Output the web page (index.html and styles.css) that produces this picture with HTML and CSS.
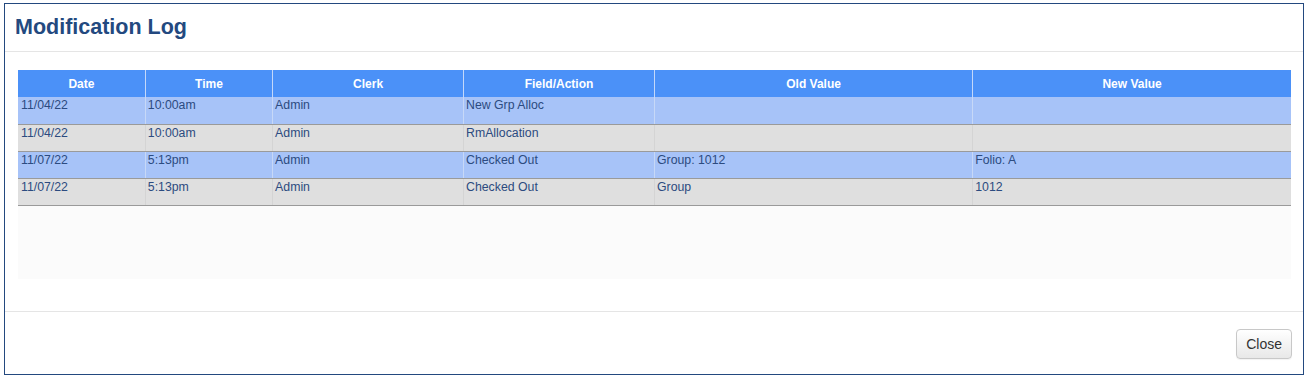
FILE: index.html
```html
<!DOCTYPE html>
<html>
<head lang="en">
    <meta charset="UTF-8">
    <title>Modification Log</title>
    <link rel="stylesheet" href="styles.css">
</head>
<body>
<div class="modal">
    <div class="modal-header">
        <h2>Modification Log</h2>
    </div>
    <div class="modal-body">
        <div class="grid-wrap">
            <table class="grid">
                <colgroup>
                    <col style="width:10%"><col style="width:10%"><col style="width:15%">
                    <col style="width:15%"><col style="width:25%"><col style="width:25%">
                </colgroup>
                <thead>
                    <tr><th>Date</th><th>Time</th><th>Clerk</th><th>Field/Action</th><th>Old Value</th><th>New Value</th></tr>
                </thead>
                <tbody>
                    <tr class="odd"><td>11/04/22</td><td>10:00am</td><td>Admin</td><td>New Grp Alloc</td><td></td><td></td></tr>
                    <tr class="even"><td>11/04/22</td><td>10:00am</td><td>Admin</td><td>RmAllocation</td><td></td><td></td></tr>
                    <tr class="odd"><td>11/07/22</td><td>5:13pm</td><td>Admin</td><td>Checked Out</td><td>Group: 1012</td><td>Folio: A</td></tr>
                    <tr class="even"><td>11/07/22</td><td>5:13pm</td><td>Admin</td><td>Checked Out</td><td>Group</td><td>1012</td></tr>
                </tbody>
            </table>
        </div>
    </div>
    <div class="modal-footer">
        <button class="btn">Close</button>
    </div>
</div>
</body>
</html>
```

FILE: styles.css
```css
*{padding:0;margin:0;box-sizing:border-box;}
body{font-family:"Liberation Sans",Helvetica,Arial,sans-serif;background:#fff;}

.modal{width:1300px;height:372px;margin:3px 0 0 4px;border:1px solid #23497f;display:flex;flex-direction:column;background:#fff;}

.modal-header{height:48px;padding:11px 10px 0;border-bottom:1px solid #e5e5e5;}
.modal-header h2{font-size:21.5px;line-height:24px;font-weight:bold;color:#23497f;}

.modal-body{padding:18px 12px 32px 13px;}
.grid-wrap{height:209px;background:#fbfbfb;}

.grid{width:100%;border-collapse:collapse;table-layout:fixed;font-size:12.3px;}
.grid th{height:27px;background:#4b91f8;color:#fff;font-weight:bold;font-size:12px;text-align:center;vertical-align:middle;border-left:1px solid #c4d8fa;}
.grid td{height:27px;padding:1px 2px 0;vertical-align:top;text-align:left;line-height:14px;color:#2c4b80;border-left:1px solid #d4d4d4;border-bottom:1px solid #9a9a9a;}
.grid td:first-child{padding-left:3px;}
.grid th:first-child,.grid td:first-child{border-left:none;}
.grid tr.odd td{background:#a7c3f8;border-left-color:#c7d8f7;}
.grid tr.even td{background:#dfdfdf;}

.modal-footer{flex:1;border-top:1px solid #e5e5e5;padding:17px 11px 0;display:flex;justify-content:flex-end;align-items:flex-start;}
.btn{height:30px;padding:0 9px;font-family:inherit;font-size:14px;color:#333;background:linear-gradient(#fff,#e8e8e8);border:1px solid #c8c8c8;border-radius:4px;box-shadow:0 1px 1px rgba(0,0,0,.05);}
```
